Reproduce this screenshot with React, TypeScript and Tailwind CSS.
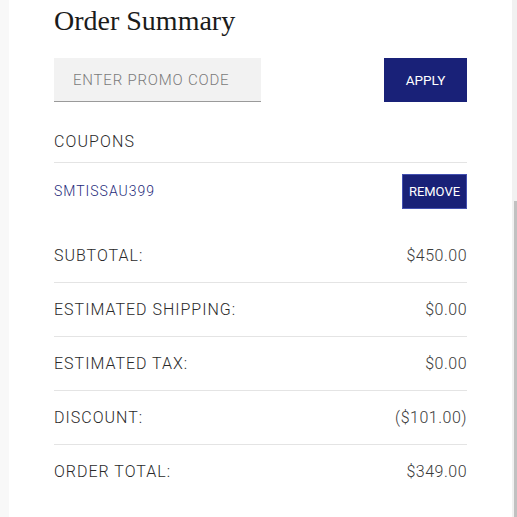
const rows = [
  { label: "SUBTOTAL:", value: "$450.00" },
  { label: "ESTIMATED SHIPPING:", value: "$0.00" },
  { label: "ESTIMATED TAX:", value: "$0.00" },
  { label: "DISCOUNT:", value: "($101.00)" },
  { label: "ORDER TOTAL:", value: "$349.00" },
];

const App = () => {
  return (
    <div className="flex h-[517px] w-[517px] overflow-hidden bg-white font-['Roboto',sans-serif]">
      <div className="w-[9px] bg-[#f8f8f8]" />
      <section className="flex-1 pl-[45px] pr-[45px]">
        <h2 className="pt-[6px] font-['Liberation_Serif',serif] text-[28px] leading-[30px] text-[#1b1b1b]">
          Order Summary
        </h2>
        <form className="mt-[22px] flex justify-between">
          <input
            type="text"
            placeholder="ENTER PROMO CODE"
            className="h-[44px] w-[207px] border-b border-[#9a9a9a] bg-[#f2f2f2] px-[19px] text-[15px] font-light tracking-[0.8px] outline-none placeholder:text-[#7a7a7a]"
          />
          <button
            type="button"
            className="h-[44px] w-[83px] bg-[#192178] text-[13.5px] text-white"
          >
            APPLY
          </button>
        </form>

        <div className="mt-[28px] border-b border-[#e4e4e4] pb-[8px] text-[16px] font-light leading-[24px] tracking-[1.1px] text-[#2a2a2a]">
          COUPONS
        </div>
        <div className="flex items-center justify-between pt-[11px] pb-[20px]">
          <span className="text-[14px] font-light tracking-[1px] text-[#252a7a]">
            SMTISSAU399
          </span>
          <button
            type="button"
            className="h-[35px] w-[65px] border border-[#4350b0] bg-[#192178] text-[13px] text-white"
          >
            REMOVE
          </button>
        </div>

        <div className="flex flex-col">
          {rows.map((r, i) => (
            <div
              key={r.label}
              className={`flex h-[54px] items-center justify-between text-[16px] font-light ${
                i < rows.length - 1 ? "border-b border-[#e4e4e4]" : ""
              }`}
            >
              <span className="tracking-[1px] text-[#2a2a2a]">{r.label}</span>
              <span className="tracking-[0.5px] text-[#3a3a3a]">{r.value}</span>
            </div>
          ))}
        </div>
      </section>
      <div className="flex w-[5px] flex-col bg-[#f1f1f1]">
        <div className="h-[201px]" />
        <div className="ml-[2px] flex-1 bg-[#c1c1c1]" />
      </div>
    </div>
  );
};

export default App;
